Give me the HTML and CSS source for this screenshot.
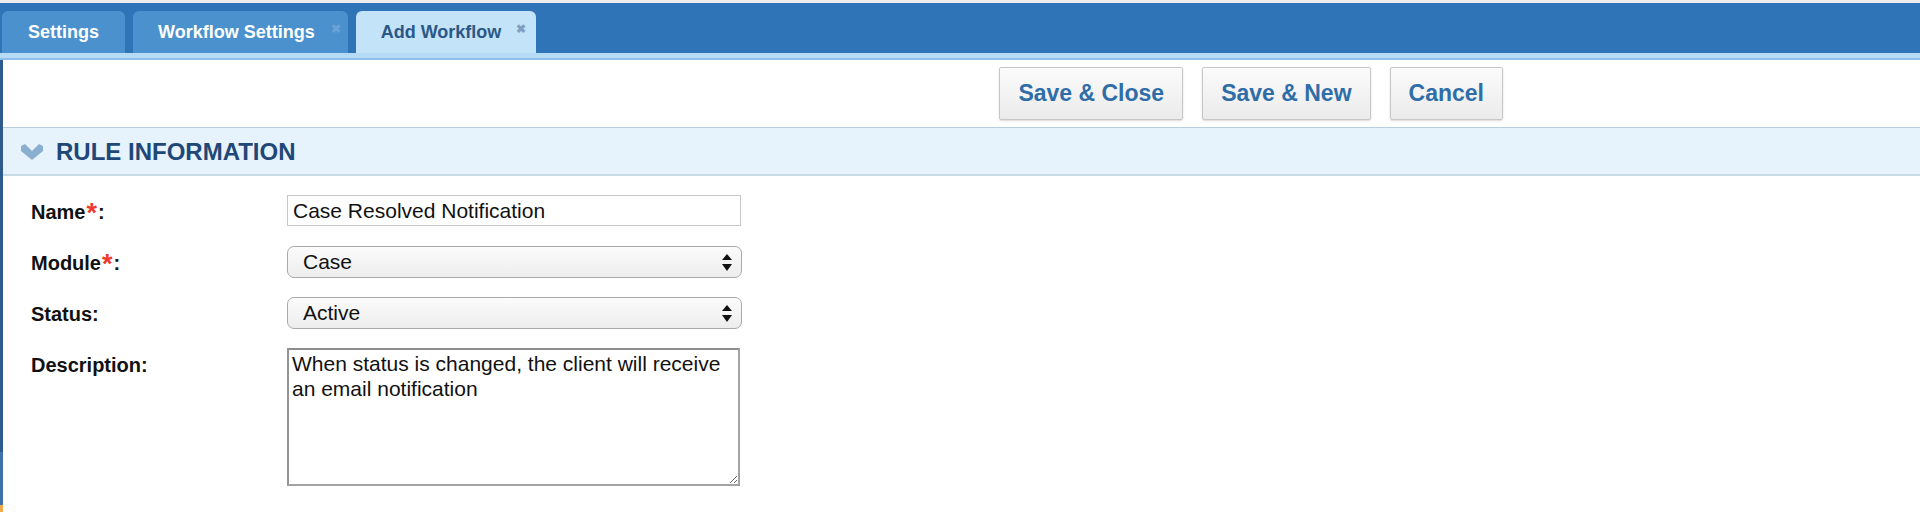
FILE: index.html
```html
<!DOCTYPE html>
<html>
<head>
<meta charset="UTF-8">
<meta name="viewport" content="width=device-width, initial-scale=1.0">
<title>Add Workflow</title>
<link rel="stylesheet" href="styles.css">
</head>
<body>
    <div class="topline"></div>
    <nav class="tabbar">
        <div class="tab">Settings</div>
        <div class="tab closable">Workflow Settings <span class="tab-close">&#x2716;</span></div>
        <div class="tab closable active">Add Workflow <span class="tab-close">&#x2716;</span></div>
    </nav>
    <div class="tabstrip"></div>

    <div class="workspace">
        <div class="edge"></div>
        <main class="content">
            <div class="toolbar">
                <button class="btn">Save &amp; Close</button>
                <button class="btn">Save &amp; New</button>
                <button class="btn">Cancel</button>
            </div>

            <section class="panel">
                <header class="section-head">
                    <svg class="chevron" width="22" height="16" viewBox="0 0 22 16">
                        <polygon points="0,2 4,0 11,7 18,0 22,2 22,7 11,16 0,7" fill="#8aaecd"/>
                    </svg>
                    <h2>RULE INFORMATION</h2>
                </header>

                <form class="rule-form">
                    <label class="field-label" for="ruleName">Name<span class="req">*</span>:</label>
                    <input class="text-input" type="text" id="ruleName" value="Case Resolved Notification">

                    <label class="field-label">Module<span class="req">*</span>:</label>
                    <div class="select">
                        <span>Case</span>
                        <svg width="10" height="17" viewBox="0 0 10 17">
                            <polygon points="5,0 10,6 0,6" fill="#111"/>
                            <polygon points="0,10 10,10 5,17" fill="#111"/>
                        </svg>
                    </div>

                    <label class="field-label">Status:</label>
                    <div class="select">
                        <span>Active</span>
                        <svg width="10" height="17" viewBox="0 0 10 17">
                            <polygon points="5,0 10,6 0,6" fill="#111"/>
                            <polygon points="0,10 10,10 5,17" fill="#111"/>
                        </svg>
                    </div>

                    <label class="field-label" for="ruleDesc">Description:</label>
                    <textarea class="text-area" id="ruleDesc">When status is changed, the client will receive an email notification</textarea>
                </form>
            </section>
        </main>
    </div>
</body>
</html>
```

FILE: styles.css
```css
body {
    font-family: "Liberation Sans", Arial, sans-serif;
    margin: 0;
    padding: 0;
    background-color: #ffffff;
    color: #111111;
    overflow: hidden;
}
.topline {
    height: 3px;
    background-color: #eeeeee;
}

/* Barra de abas */
.tabbar {
    display: flex;
    align-items: flex-end;
    gap: 8px;
    height: 50px;
    padding-left: 2px;
    background-color: #2f74b7;
}
.tab {
    display: flex;
    height: 42px;
    line-height: 42px;
    padding: 0 26px;
    background-color: #4b91cd;
    color: #ffffff;
    font-size: 18px;
    font-weight: bold;
    border-radius: 6px 6px 0 0;
}
.tab.closable {
    padding: 0 7px 0 25px;
}
.tab.active {
    background-color: #c3e3f8;
    color: #2b5886;
    width: 148px;
}
.tab-close {
    font-size: 12px;
    line-height: 12px;
    margin: 12px 0 0 16px;
    color: #6aa2d6;
}
.tab.active .tab-close {
    color: #7f9fbf;
    margin-left: 15px;
}
.tabstrip {
    height: 5px;
    background-color: #b5dbf6;
    border-bottom: 2px solid #8fbee9;
}

.workspace {
    display: flex;
    min-height: calc(100vh - 60px);
}
.edge {
    width: 3px;
    flex-shrink: 0;
    background: linear-gradient(to bottom, #2e5a8c 0, #2e5a8c 392px, #3d72aa 392px, #3d72aa 445px, #f0aa4c 445px);
}
.content {
    flex: 1;
}

/* Botoes */
.toolbar {
    display: flex;
    justify-content: flex-end;
    gap: 19px;
    padding: 7px 417px 7px 0;
}
.btn {
    height: 53px;
    padding: 0 18px;
    font-family: "Liberation Sans", Arial, sans-serif;
    font-size: 23px;
    font-weight: bold;
    color: #2f6da8;
    background: linear-gradient(to bottom, #fbfbfb, #ebebeb);
    border: 1px solid #c6c6c6;
    border-radius: 2px;
    box-shadow: 0 1px 2px rgba(0, 0, 0, 0.15);
    cursor: pointer;
}

.section-head {
    display: flex;
    align-items: center;
    height: 45px;
    padding: 1px 0 0 18px;
    background-color: #e6f3fc;
    border-top: 1px solid #b7d0de;
    border-bottom: 2px solid #c6dbe6;
}
.chevron {
    margin-right: 13px;
}
.section-head h2 {
    margin: 0;
    font-size: 24px;
    font-weight: bold;
    color: #1f4778;
}

/* Formulario */
.rule-form {
    display: grid;
    grid-template-columns: 256px 455px;
    row-gap: 19px;
    align-items: start;
    padding: 19px 0 0 28px;
}
.field-label {
    font-size: 20px;
    font-weight: bold;
    line-height: 24px;
    padding-top: 5px;
}
.req {
    color: #ee3a2c;
    font-size: 27px;
    line-height: 0;
    vertical-align: -3px;
    margin: 0 1px;
}
.text-input {
    width: 454px;
    height: 31px;
    margin: 0 0 1px 0;
    padding: 0 5px;
    box-sizing: border-box;
    border: 1px solid #c8c8c8;
    font-family: "Liberation Sans", Arial, sans-serif;
    font-size: 21px;
    color: #111111;
}
.select {
    display: flex;
    align-items: center;
    justify-content: space-between;
    width: 455px;
    height: 32px;
    padding: 0 9px 0 15px;
    box-sizing: border-box;
    border: 1px solid #a9a9a9;
    border-radius: 7px;
    background: linear-gradient(to bottom, #fbfbfb, #ededed);
    font-size: 21px;
}
.text-area {
    width: 453px;
    height: 138px;
    margin: 0;
    padding: 1px 3px;
    box-sizing: border-box;
    border: 2px solid #a3a3a3;
    border-top-color: #8e8e8e;
    border-left-color: #959595;
    font-family: "Liberation Sans", Arial, sans-serif;
    font-size: 21px;
    line-height: 25px;
    color: #111111;
    resize: both;
}
```
